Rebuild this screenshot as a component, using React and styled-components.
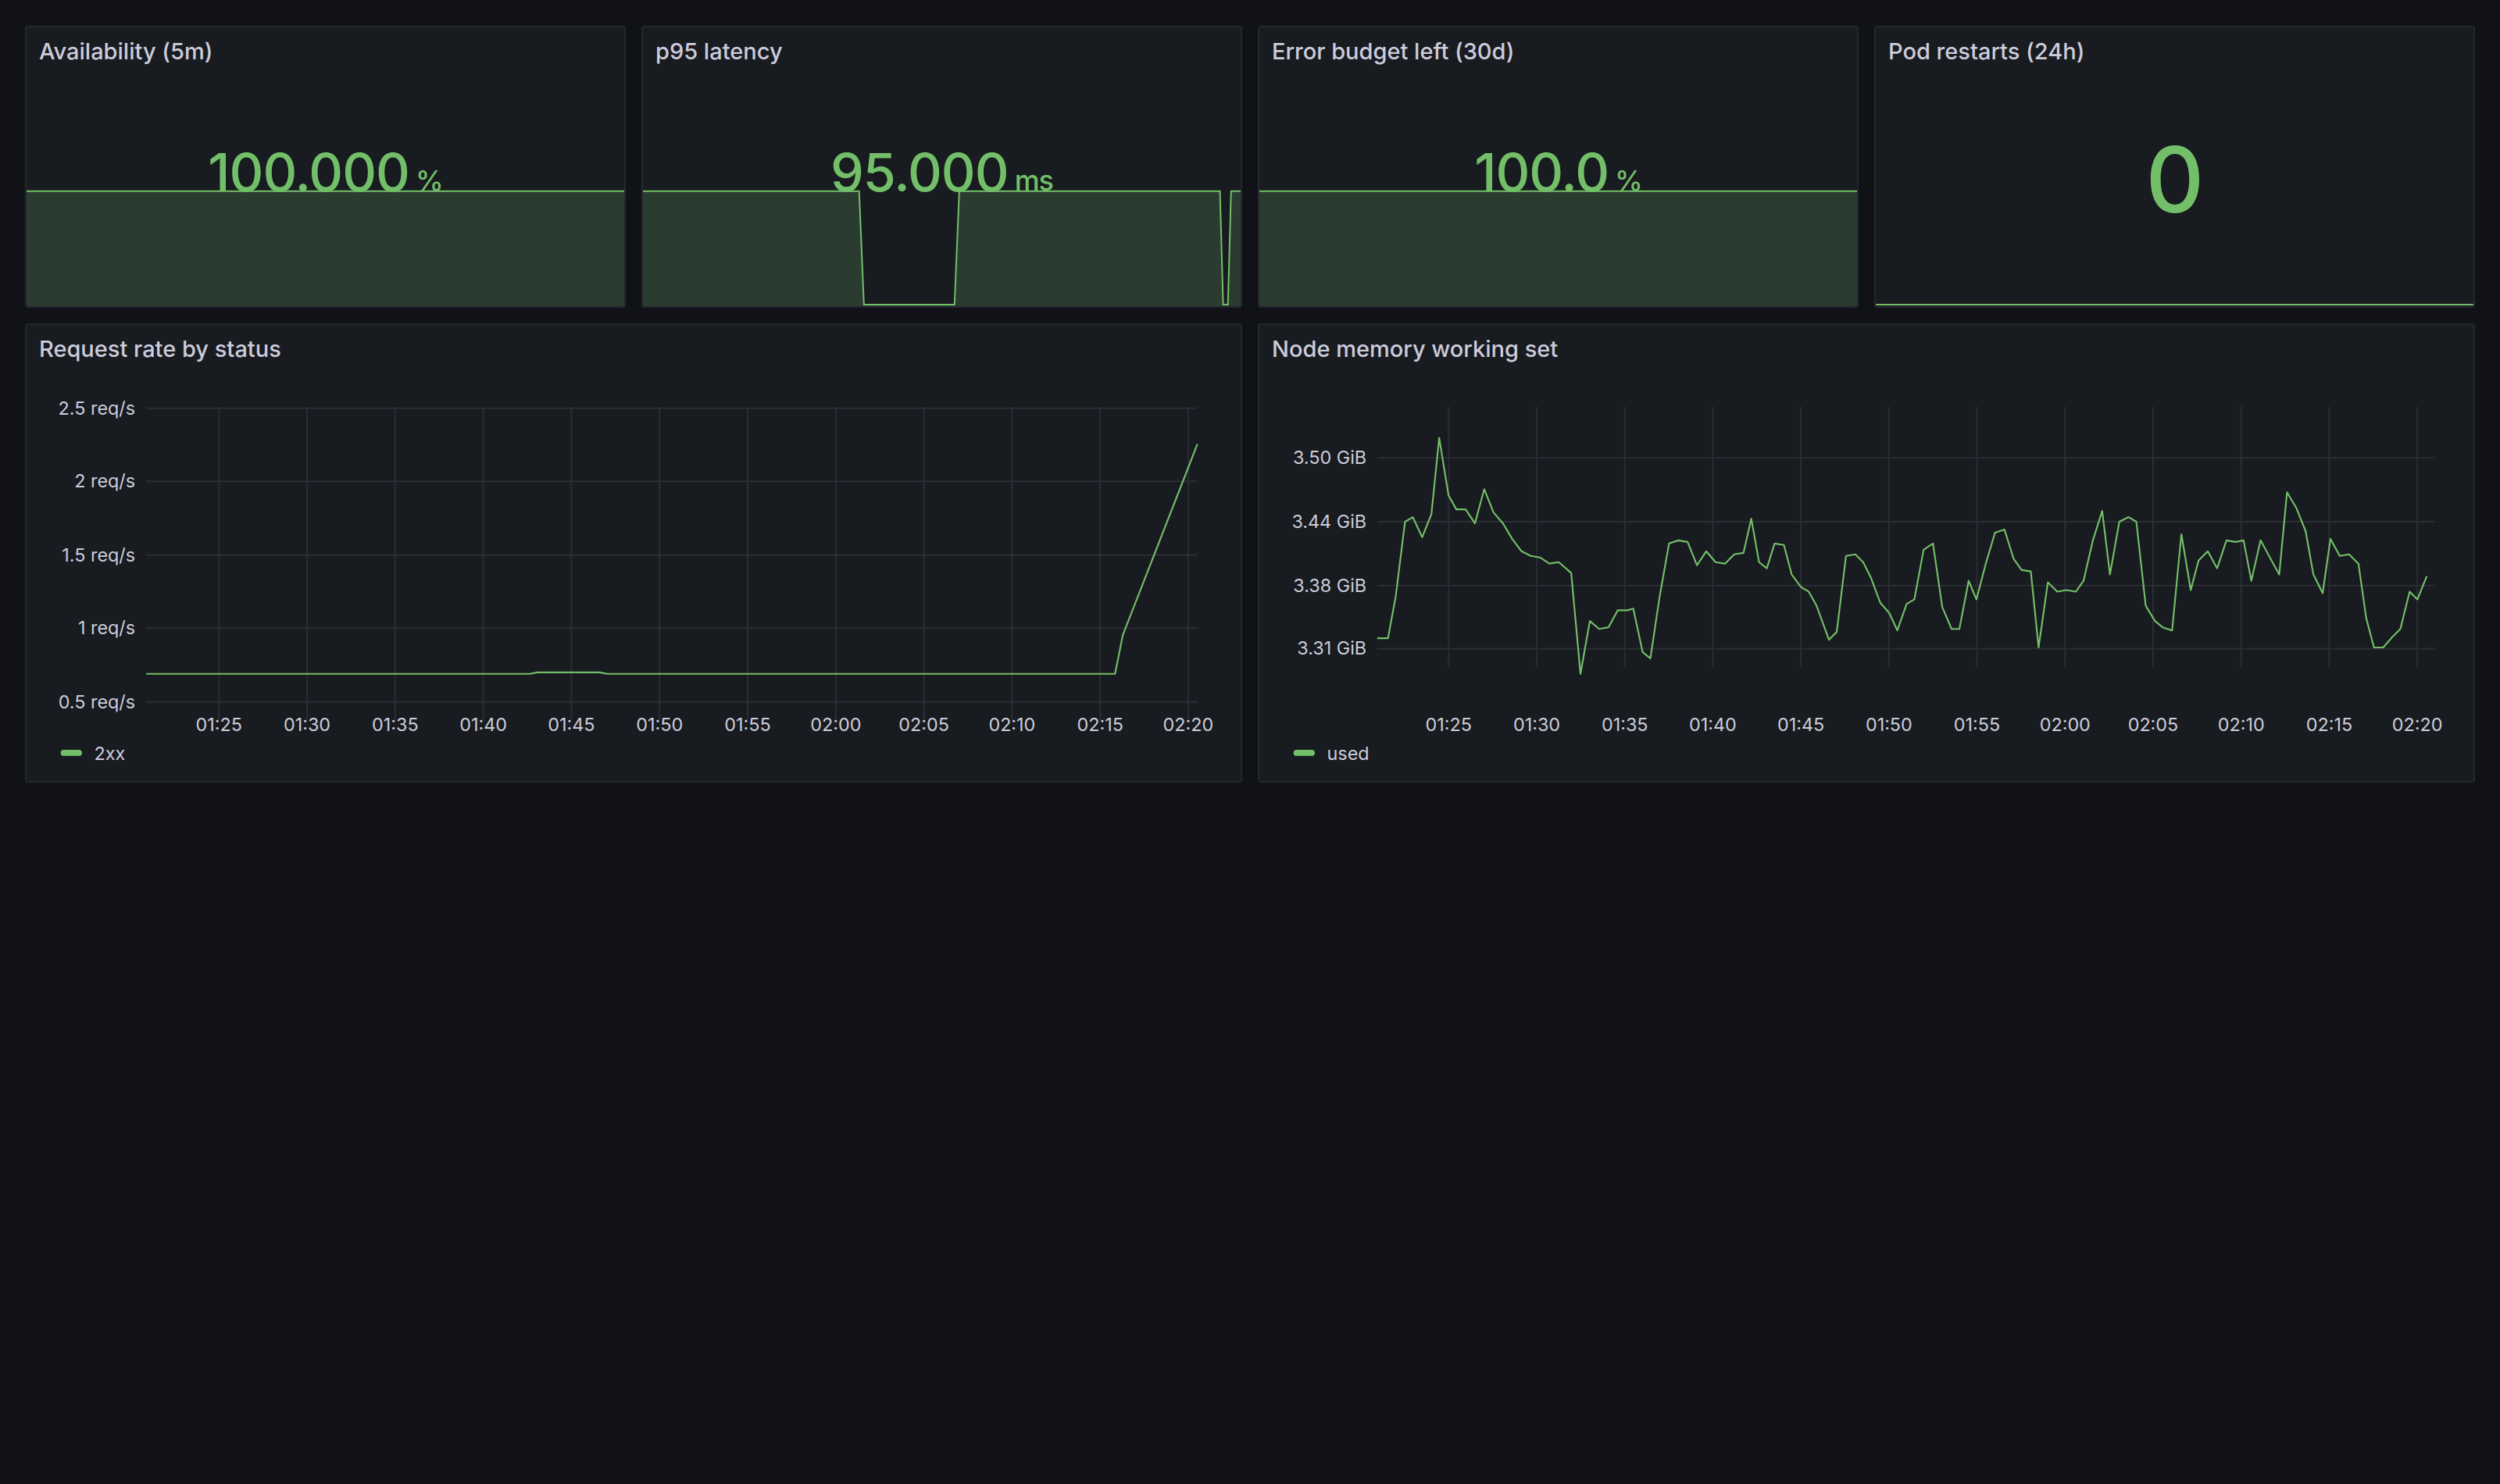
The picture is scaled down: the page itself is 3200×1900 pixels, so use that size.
import styled, { createGlobalStyle } from 'styled-components';

const S = 2.0408;
const GREEN = '#73bf69';

const Global = createGlobalStyle`
  html, body { margin: 0; background: #111217; }
  body { font-family: Inter, "Noto Sans", sans-serif; color: #ccccdc; }
`;

const Page = styled.div`
  width: 3200px;
  height: 1900px;
  box-sizing: border-box;
  padding: 33px 32px;
  display: flex;
  flex-direction: column;
  gap: 20px;
`;

const Row = styled.div`
  display: grid;
  grid-template-columns: repeat(${(p) => p.cols}, 1fr);
  gap: 20px;
  height: ${(p) => p.h}px;
`;

const Panel = styled.div`
  position: relative;
  display: flex;
  flex-direction: column;
  background: #181b1f;
  border: 2px solid #24272d;
  border-radius: 4px;
  overflow: hidden;
  box-sizing: border-box;
`;

const Title = styled.div`
  position: relative;
  z-index: 1;
  padding: 14px 16px 0;
  height: 48px;
  font-size: 29px;
  font-weight: 500;
  line-height: 34px;
  color: #ccccdc;
`;

const StatBody = styled.div`
  position: relative;
  z-index: 1;
  flex: 1;
  display: flex;
  align-items: center;
  justify-content: center;
  padding-bottom: ${(p) => (p.big ? 30 : 50)}px;
  color: ${GREEN};
  font-weight: 500;
  font-size: ${(p) => (p.big ? 116 : 68)}px;
  letter-spacing: -1px;
`;

const Unit = styled.span`
  font-size: 36px;
  margin-left: 8px;
  align-self: center;
  padding-top: 22px;
`;

const Spark = styled.svg`
  position: absolute;
  inset: 0;
  width: 100%;
  height: 100%;
`;

const ChartSvg = styled.svg`
  display: block;
  width: 100%;
  flex: 1;
`;

const Axis = styled.text`
  fill: #ccccdc;
  font-size: 24px;
  font-family: Inter, "Noto Sans", sans-serif;
`;

// stat sparklines in display units relative to panel (376 x 177)
const sparks = {
  flat: 'M0,104 L376,104',
  p95: 'M0,104 L136,104 L139,176 L196,176 L199,104 L363,104 L365,176 L368,176 L370,104 L376,104',
  zero: 'M0,176 L376,176',
};

function StatPanel({ title, value, unit, spark, fill = true, big }) {
  const d = sparks[spark];
  return (
    <Panel>
      <Spark viewBox="0 0 376 177" preserveAspectRatio="none">
        {fill && <path d={`${d} L376,177 L0,177 Z`} fill="#2a3c30" />}
        <path d={d} fill="none" stroke={GREEN} strokeWidth="2" vectorEffect="non-scaling-stroke" />
      </Spark>
      <Title>{title}</Title>
      <StatBody big={big}>
        {value}
        {unit && <Unit>{unit}</Unit>}
      </StatBody>
    </Panel>
  );
}

const times = ['01:25', '01:30', '01:35', '01:40', '01:45', '01:50', '01:55', '02:00', '02:05', '02:10', '02:15', '02:20'];

const reqPts = [
  [83, 420], [330, 420], [335, 419], [375, 419], [380, 420], [707, 420], [712, 395], [760, 272],
];

const memPts = [
  [855, 397], [862, 397], [867, 370], [873, 322], [878, 319], [884, 332], [890, 317], [895, 268], [901, 305],
  [906, 314], [912, 314], [918, 323], [924, 301], [930, 316], [936, 323], [942, 333], [948, 341], [954, 344],
  [960, 345], [966, 349], [972, 348], [980, 355], [986, 420], [992, 386], [998, 391], [1004, 390], [1010, 379],
  [1016, 379], [1020, 378], [1026, 406], [1031, 410], [1037, 370], [1043, 336], [1049, 334], [1055, 335],
  [1061, 350], [1067, 341], [1073, 348], [1079, 349], [1085, 343], [1091, 342], [1096, 320], [1101, 348],
  [1106, 352], [1111, 336], [1117, 337], [1122, 356], [1128, 364], [1133, 367], [1138, 376], [1146, 398],
  [1151, 393], [1157, 344], [1163, 343], [1168, 348], [1173, 358], [1179, 374], [1185, 381], [1190, 392],
  [1196, 375], [1201, 372], [1207, 340], [1213, 336], [1219, 377], [1225, 391], [1230, 391], [1236, 360],
  [1241, 372], [1247, 349], [1253, 329], [1259, 327], [1265, 346], [1270, 353], [1276, 354], [1281, 403],
  [1287, 361], [1293, 367], [1299, 366], [1305, 367], [1310, 360], [1316, 334], [1322, 315], [1327, 356],
  [1333, 322], [1339, 319], [1344, 322], [1350, 376], [1356, 386], [1361, 390], [1367, 392], [1373, 330],
  [1379, 366], [1384, 347], [1390, 341], [1396, 352], [1402, 334], [1408, 335], [1413, 334], [1418, 360],
  [1424, 334], [1430, 345], [1436, 356], [1441, 303], [1447, 313], [1453, 328], [1458, 356], [1464, 368],
  [1469, 333], [1475, 344], [1481, 343], [1487, 349], [1492, 384], [1497, 403], [1503, 403], [1509, 396],
  [1514, 391], [1520, 367], [1525, 372], [1531, 357],
];

function TimeSeries({ title, left, plotX, plotR, yTicks, xStart, xEnd, points, legend }) {
  const toPath = points
    .map(([x, y], i) => `${i ? 'L' : 'M'}${(x * S - left).toFixed(1)},${(y * S - 414 - 48).toFixed(1)}`)
    .join(' ');
  const step = (xEnd - xStart) / 11;
  return (
    <Panel>
      <Title>{title}</Title>
      <ChartSvg viewBox="0 0 1554 536">
        {yTicks.map(([label, y]) => (
          <g key={label}>
            <line x1={plotX} x2={plotR} y1={y} y2={y} stroke="#2b2e34" strokeWidth="2" />
            <Axis x={plotX - 14} y={y + 8} textAnchor="end">{label}</Axis>
          </g>
        ))}
        {times.map((t, i) => {
          const x = xStart + i * step;
          return (
            <g key={t}>
              <line x1={x} x2={x} y1={44} y2={yTicks[yTicks.length - 1][1] + 24} stroke="#2b2e34" strokeWidth="2" />
              <Axis x={x} y={470} textAnchor="middle">{t}</Axis>
            </g>
          );
        })}
        <path d={toPath} fill="none" stroke={GREEN} strokeWidth="2.2" strokeLinejoin="round" />
        <rect x="24" y="495" width="28" height="8" rx="4" fill={GREEN} />
        <Axis x="68" y="508">{legend}</Axis>
      </ChartSvg>
    </Panel>
  );
}

export default function App() {
  return (
    <>
      <Global />
      <Page>
        <Row cols={4} h={361}>
          <StatPanel title="Availability (5m)" value="100.000" unit="%" spark="flat" />
          <StatPanel title="p95 latency" value="95.000" unit="ms" spark="p95" />
          <StatPanel title="Error budget left (30d)" value="100.0" unit="%" spark="flat" />
          <StatPanel title="Pod restarts (24h)" value="0" spark="zero" fill={false} big />
        </Row>
        <Row cols={2} h={588}>
          <TimeSeries
            title="Request rate by status"
            left={33}
            plotX={136}
            plotR={1518}
            xStart={232}
            xEnd={1506}
            yTicks={[['2.5 req/s', 46], ['2 req/s', 142], ['1.5 req/s', 239], ['1 req/s', 335], ['0.5 req/s', 432]]}
            points={reqPts}
            legend="2xx"
          />
          <TimeSeries
            title="Node memory working set"
            left={1611}
            plotX={134}
            plotR={1524}
            xStart={228}
            xEnd={1501}
            yTicks={[['3.50 GiB', 111], ['3.44 GiB', 195], ['3.38 GiB', 279], ['3.31 GiB', 362]]}
            points={memPts}
            legend="used"
          />
        </Row>
      </Page>
    </>
  );
}
